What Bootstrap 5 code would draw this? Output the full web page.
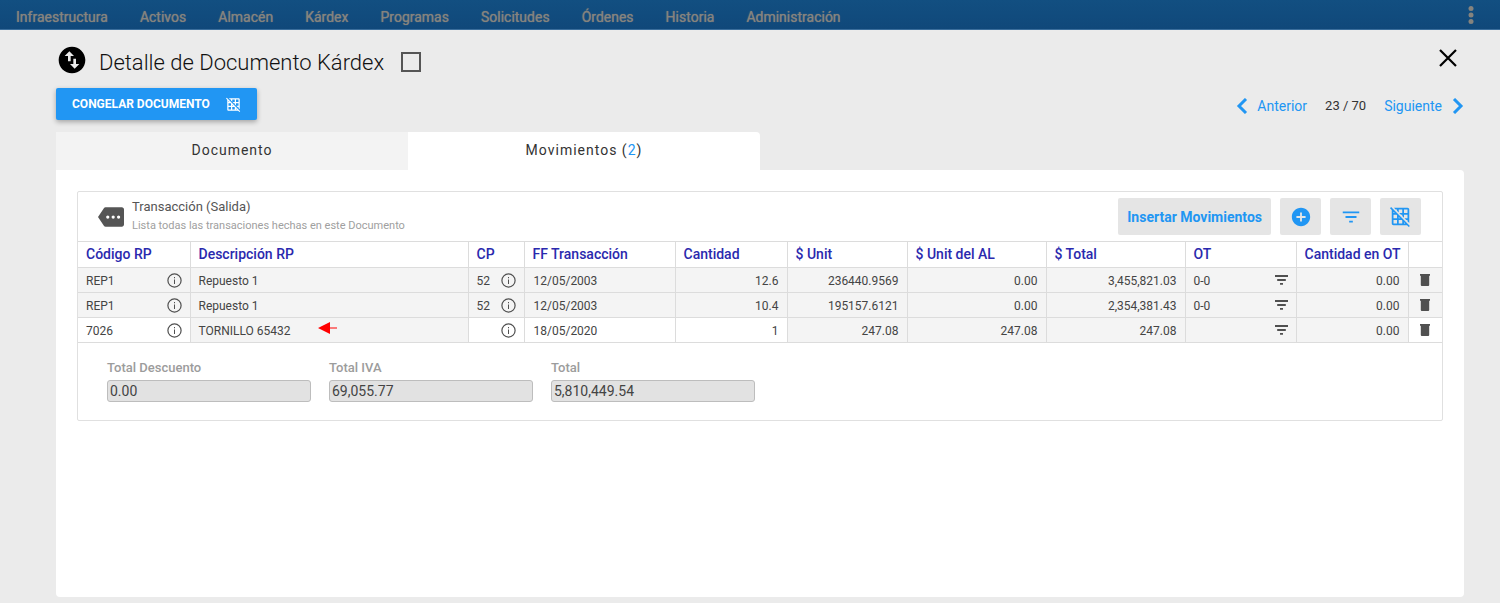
<!DOCTYPE html>
<html lang="es">
<head>
<meta charset="utf-8">
<meta name="viewport" content="width=device-width, initial-scale=1">
<title>Detalle de Documento Kárdex</title>
<link href="https://cdn.jsdelivr.net/npm/bootstrap@5.3.0/dist/css/bootstrap.min.css" rel="stylesheet">
<style>
  body { font-family: Roboto, "Liberation Sans", sans-serif; font-size: 14px; line-height: 20px; color: #333; background: #ebebeb; }
  a { text-decoration: none; }
  svg { display: block; fill: currentColor; flex: none; }
  .topbar { min-height: 30px; padding: 6px 16px 0; background: linear-gradient(#124f81, #10487a); border-bottom: 1px solid #3b6e9c; }
  .topbar .menu { gap: 32px; }
  .topbar a { color: #85837e; text-shadow: 0 0 1px #85837e; line-height: 23px; height: 23px; }
  .topbar .more { color: #85837e; margin-right: 4px; }
  .page { padding: 14px 36px 6px 56px; }
  .title { font-size: 22px; font-weight: 300; line-height: 30px; padding-top: 1px; margin-left: 11px; color: #111; }
  .flag { appearance: none; width: 20px; height: 20px; border: 2px solid #555; background: transparent; margin: 0 0 0 17px; }
  .flag:checked { background: #555; }
  .freeze { height: 32px; padding: 0 16px; border-radius: 2px; background: #2196f3; color: #fff; font-size: 12px; font-weight: 700; box-shadow: 0 2px 5px rgba(0,0,0,.3); }
  .freeze:hover { background: #1e88e5; color: #fff; }
  .pager { gap: 18px; }
  .pager span { font-size: 13px; }
  .pager a, .tool, .count { color: #2196f3; }
  .doc-tabs { width: 50%; }
  .doc-tabs button { height: 38px; border: 0; padding: 0 0 2px; background: #f3f3f3; color: #333; letter-spacing: 1px; }
  .doc-tabs .active { background: #fff; border-radius: 0 4px 0 0; }
  .sheet { background: #fff; border-radius: 0 4px 4px 4px; padding: 21px; }
  .panel { border: 1px solid #e0e0e0; border-radius: 2px; }
  .panel-head { height: 49px; padding: 0 21px 0 20px; }
  .panel-name { font-size: 13px; line-height: 18px; color: #555; }
  .panel-note { font-size: 11px; line-height: 20px; color: #a0a0a0; }
  .tools { gap: 9px; }
  .tool { height: 37px; min-width: 41px; padding: 0 9px; border: 0; border-radius: 2px; background: #e5e5e5; font-weight: 700; display: flex; align-items: center; justify-content: center; }
  .moves { width: 100%; table-layout: fixed; border-collapse: collapse; }
  .moves th, .moves td { border: 1px solid #dcdcdc; padding: 0 8px; white-space: nowrap; }
  .moves tr > :first-child { border-left: 0; }
  .moves tr > :last-child { border-right: 0; }
  .moves th { height: 26px; padding-bottom: 2px; color: #2a29ae; font-size: 14px; font-weight: 500; line-height: 20px; }
  .moves td { height: 25px; padding-top: 2px; font-size: 12px; line-height: 20px; background: #f4f4f4; color: #444; }
  .moves td.open { background: #fff; }
  .moves td.date { padding-left: 9px; }
  .moves button { border: 0; background: none; padding: 0 0 2px; color: #505050; }
  .w-sm { width: 112px; } .w-ot { width: 111px; } .w-cp { width: 56px; } .w-date { width: 151px; } .w-unit { width: 120px; } .w-amt { width: 139px; } .w-del { width: 34px; }
  .marker { color: #f00; margin: 0 0 6px 28px; }
  .totals { padding: 14px 29px 18px; gap: 18px; }
  .totals > div { flex: 0 0 204px; }
  .totals label { display: block; font-size: 13px; font-weight: 500; line-height: 22px; margin-bottom: 1px; color: #9c9c9c; }
  .totals input { display: block; width: 100%; height: 22px; padding: 0 2px; border: 1px solid #bdbdbd; border-radius: 3px; background: #e2e2e2; color: #444; font-size: 14px; }
</style>
</head>
<body class="d-flex flex-column min-vh-100">
<svg width="0" height="0" class="position-absolute" aria-hidden="true">
  <symbol id="grid" viewBox="0 0 24 24"><path d="M8 4v1.45l2 2V4h4v4h-3.45l2 2H14v1.45l2 2V10h4v4h-3.45l2 2H20v1.45l2 2V4c0-1.1-.9-2-2-2H4.55l2 2H8zm8 0h4v4h-4V4zM1.27 1.27L0 2.55l2 2V20c0 1.1.9 2 2 2h15.46l2 2 1.27-1.27L1.27 1.27zM10 12.55L11.45 14H10v-1.45zm-6-6L5.45 8H4V6.55zM8 20H4v-4h4v4zm0-6H4v-4h3.45l.55.55V14zm6 6h-4v-4h3.45l.55.54V20zm2 0v-1.46L17.46 20H16z"/></symbol>
  <symbol id="info" viewBox="0 0 15 15"><circle cx="7.5" cy="7.5" r="6.6" fill="none" stroke="currentColor" stroke-width="1.2"/><path d="M7 6.5h1v4.5H7zM7 4h1v1.2H7z"/></symbol>
  <symbol id="lines" viewBox="0 0 13 10"><path d="M0 0h13v2H0zM2.2 4h8.6v2H2.2zM5 8h3v1.7H5z"/></symbol>
  <symbol id="trash" viewBox="0 0 10 12"><path d="M0 0h10v1.8H0zM.8 1.8h8.4V11q0 1-1 1H1.8q-1 0-1-1z"/></symbol>
</svg>

<nav class="topbar d-flex justify-content-between" aria-label="Principal">
  <div class="menu d-flex">
    <a href="#">Infraestructura</a><a href="#">Activos</a><a href="#">Almacén</a><a href="#">Kárdex</a><a href="#">Programas</a><a href="#">Solicitudes</a><a href="#">Órdenes</a><a href="#">Historia</a><a href="#">Administración</a>
  </div>
  <button class="more btn p-0 border-0 align-self-start" aria-label="Más opciones"><svg width="18" height="18" viewBox="0 0 18 18"><circle cx="9" cy="2.500" r="2.500"/><circle cx="9" cy="9" r="2.500"/><circle cx="9" cy="15.500" r="2.500"/></svg></button>
</nav>

<main class="page d-flex flex-column flex-grow-1">
  <header class="d-flex align-items-center">
    <svg class="mb-1" width="32" height="32" viewBox="0 0 24 24" color="#000"><path d="M12 2C6.480 2 2 6.480 2 12s4.480 10 10 10 10-4.480 10-10S17.520 2 12 2zM6.500 9L10 5.500 13.500 9H11v4H9V9H6.500zm11 6L14 18.500 10.500 15H13v-4h2v4h2.500z"/></svg>
    <h1 class="title mb-0">Detalle de Documento Kárdex</h1>
    <input class="flag" type="checkbox" aria-label="Marcar documento">
    <button class="btn p-0 border-0 ms-auto me-1 mb-2" aria-label="Cerrar"><svg width="24" height="24" viewBox="0 0 24 24"><path d="M4 4l16 16M20 4L4 20" stroke="#000" stroke-width="2.200"/></svg></button>
  </header>

  <div class="d-flex justify-content-between align-items-center mt-2 pb-2">
    <button class="freeze btn border-0 d-flex align-items-center gap-3">CONGELAR DOCUMENTO <svg width="15" height="15"><use href="#grid"/></svg></button>
    <div class="pager d-flex align-items-center mt-1">
      <a href="#" class="d-flex align-items-center gap-2"><svg width="14" height="16" viewBox="0 0 14 16"><path d="M11 1L4 8l7 7" fill="none" stroke="currentColor" stroke-width="3"/></svg>Anterior</a>
      <span>23 / 70</span>
      <a href="#" class="d-flex align-items-center gap-2">Siguiente<svg width="14" height="16" viewBox="0 0 14 16"><path d="M4 1l7 7-7 7" fill="none" stroke="currentColor" stroke-width="3"/></svg></a>
    </div>
  </div>

  <div class="doc-tabs d-flex mt-1" role="tablist">
    <button class="flex-fill w-50" role="tab" aria-selected="false">Documento</button>
    <button class="flex-fill w-50 active" role="tab" aria-selected="true">Movimientos (<span class="count">2</span>)</button>
  </div>

  <section class="sheet flex-grow-1">
    <div class="panel">
      <div class="panel-head d-flex align-items-center">
        <svg width="26" height="26" viewBox="0 0 24 24" color="#555"><path fill-rule="evenodd" d="M22 3H7c-.690 0-1.230.350-1.590.880L0 12l5.410 8.110c.360.530.970.890 1.660.890H22c1.100 0 2-.900 2-2V5c0-1.100-.900-2-2-2zM9 13.500a1.500 1.500 0 1 1 0-3 1.500 1.500 0 0 1 0 3zm5 0a1.500 1.500 0 1 1 0-3 1.500 1.500 0 0 1 0 3zm5 0a1.500 1.500 0 1 1 0-3 1.500 1.500 0 0 1 0 3z"/></svg>
        <div class="ms-2">
          <div class="panel-name">Transacción (Salida)</div>
          <div class="panel-note">Lista todas las transaciones hechas en este Documento</div>
        </div>
        <div class="tools d-flex ms-auto">
          <button class="tool">Insertar Movimientos</button>
          <button class="tool" aria-label="Agregar"><svg width="22" height="22" viewBox="0 0 24 24"><path d="M12 2C6.480 2 2 6.480 2 12s4.480 10 10 10 10-4.480 10-10S17.520 2 12 2zm5 11h-4v4h-2v-4H7v-2h4V7h2v4h4v2z"/></svg></button>
          <button class="tool" aria-label="Filtrar"><svg width="22" height="22" viewBox="0 0 24 24"><path d="M10 18h4v-2h-4v2zM3 6v2h18V6H3zm3 7h12v-2H6v2z"/></svg></button>
          <button class="tool" aria-label="Quitar cuadrícula"><svg width="21" height="21"><use href="#grid"/></svg></button>
        </div>
      </div>

      <table class="moves">
        <colgroup><col class="w-sm"><col><col class="w-cp"><col class="w-date"><col class="w-sm"><col class="w-unit"><col class="w-amt"><col class="w-amt"><col class="w-ot"><col class="w-sm"><col class="w-del"></colgroup>
        <thead>
          <tr><th>Código RP</th><th>Descripción RP</th><th>CP</th><th>FF Transacción</th><th>Cantidad</th><th>$ Unit</th><th>$ Unit del AL</th><th>$ Total</th><th>OT</th><th>Cantidad en OT</th><th aria-label="Eliminar"></th></tr>
        </thead>
        <tbody>
          <tr>
            <td><div class="d-flex justify-content-between align-items-center">REP1<button aria-label="Información"><svg width="15" height="15"><use href="#info"/></svg></button></div></td>
            <td>Repuesto 1</td>
            <td><div class="d-flex justify-content-between align-items-center">52<button aria-label="Información"><svg width="15" height="15"><use href="#info"/></svg></button></div></td>
            <td class="date">12/05/2003</td><td class="text-end">12.6</td><td class="text-end">236440.9569</td><td class="text-end">0.00</td><td class="text-end">3,455,821.03</td>
            <td><div class="d-flex justify-content-between align-items-center">0-0<button aria-label="Filtrar"><svg width="13" height="10"><use href="#lines"/></svg></button></div></td>
            <td class="text-end">0.00</td>
            <td><button class="d-block mx-auto" aria-label="Eliminar"><svg width="10" height="12"><use href="#trash"/></svg></button></td>
          </tr>
          <tr>
            <td><div class="d-flex justify-content-between align-items-center">REP1<button aria-label="Información"><svg width="15" height="15"><use href="#info"/></svg></button></div></td>
            <td>Repuesto 1</td>
            <td><div class="d-flex justify-content-between align-items-center">52<button aria-label="Información"><svg width="15" height="15"><use href="#info"/></svg></button></div></td>
            <td class="date">12/05/2003</td><td class="text-end">10.4</td><td class="text-end">195157.6121</td><td class="text-end">0.00</td><td class="text-end">2,354,381.43</td>
            <td><div class="d-flex justify-content-between align-items-center">0-0<button aria-label="Filtrar"><svg width="13" height="10"><use href="#lines"/></svg></button></div></td>
            <td class="text-end">0.00</td>
            <td><button class="d-block mx-auto" aria-label="Eliminar"><svg width="10" height="12"><use href="#trash"/></svg></button></td>
          </tr>
          <tr>
            <td class="open"><div class="d-flex justify-content-between align-items-center">7026<button aria-label="Información"><svg width="15" height="15"><use href="#info"/></svg></button></div></td>
            <td><div class="d-flex align-items-center">TORNILLO 65432<svg class="marker" width="20" height="12" viewBox="0 0 20 12"><path d="M0 6L12 0v12zM12 5.500h7v1h-7z"/></svg></div></td>
            <td class="open"><div class="d-flex justify-content-end align-items-center"><button aria-label="Información"><svg width="15" height="15"><use href="#info"/></svg></button></div></td>
            <td class="open date">18/05/2020</td><td class="open text-end">1</td><td class="text-end">247.08</td><td class="text-end">247.08</td><td class="text-end">247.08</td>
            <td><div class="d-flex justify-content-end align-items-center"><button aria-label="Filtrar"><svg width="13" height="10"><use href="#lines"/></svg></button></div></td>
            <td class="text-end">0.00</td>
            <td class="open"><button class="d-block mx-auto" aria-label="Eliminar"><svg width="10" height="12"><use href="#trash"/></svg></button></td>
          </tr>
        </tbody>
      </table>

      <div class="totals d-flex">
        <div><label for="desc">Total Descuento</label><input id="desc" value="0.00" readonly></div>
        <div><label for="iva">Total IVA</label><input id="iva" value="69,055.77" readonly></div>
        <div><label for="total">Total</label><input id="total" value="5,810,449.54" readonly></div>
      </div>
    </div>
  </section>
</main>
<script src="https://cdn.jsdelivr.net/npm/bootstrap@5.3.0/dist/js/bootstrap.bundle.min.js"></script>
</body>
</html>
